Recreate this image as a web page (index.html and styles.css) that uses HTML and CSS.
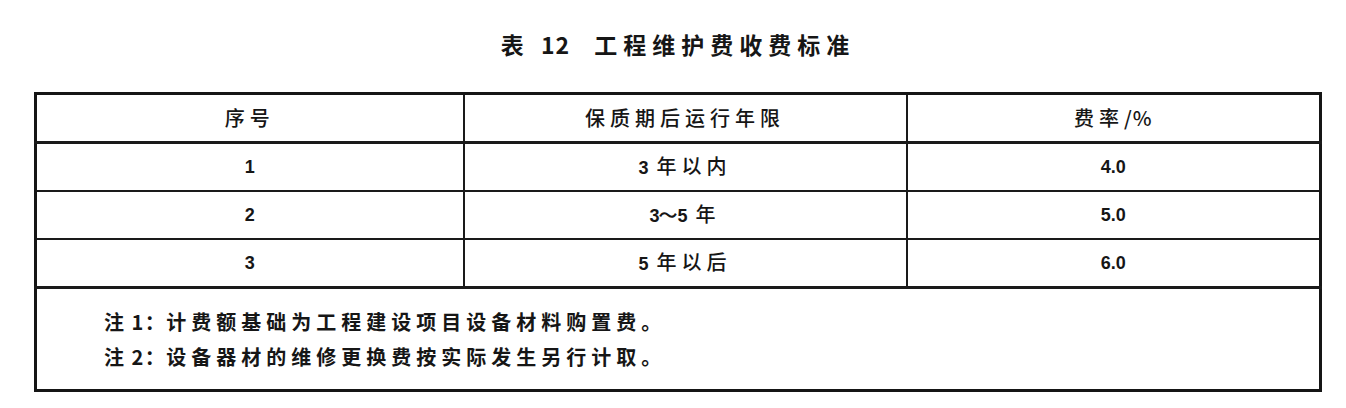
FILE: index.html
```html
<!DOCTYPE html>
<html lang="zh-CN">
<head>
<meta charset="utf-8">
<title>表 12 工程维护费收费标准</title>
<link rel="stylesheet" href="styles.css">
</head>
<body>
<div class="page">
  <h1 class="caption">表 <span class="tn">12</span><span class="gap"></span>工程维护费收费标准</h1>
  <table class="fee">
    <colgroup>
      <col class="c1"><col class="c2"><col class="c3">
    </colgroup>
    <thead>
      <tr><th>序号</th><th>保质期后运行年限</th><th>费率<span class="sym">/%</span></th></tr>
    </thead>
    <tbody>
      <tr><td class="num">1</td><td><span class="n">3</span>年以内</td><td class="num">4.0</td></tr>
      <tr><td class="num">2</td><td><span class="n">3～5</span>年</td><td class="num">5.0</td></tr>
      <tr><td class="num">3</td><td><span class="n">5</span>年以后</td><td class="num">6.0</td></tr>
      <tr class="notes">
        <td colspan="3">
          <p><span class="lbl">注 1：</span>计费额基础为工程建设项目设备材料购置费。</p>
          <p><span class="lbl">注 2：</span>设备器材的维修更换费按实际发生另行计取。</p>
        </td>
      </tr>
    </tbody>
  </table>
</div>
</body>
</html>
```

FILE: styles.css
```css
html, body {
  margin: 0;
  padding: 0;
  background: #ffffff;
}
body {
  font-family: "Noto Sans CJK SC", "Liberation Sans", sans-serif;
  color: #161616;
}
.page {
  padding: 28px 24px 0 34px;
}
.caption {
  margin: 0 0 32px 0;
  text-align: center;
  font-size: 23px;
  line-height: 32px;
  font-weight: 700;
  letter-spacing: 6px;
}
.caption .tn {
  letter-spacing: 1px;
}
.caption .gap {
  display: inline-block;
  width: 24px;
}
.fee {
  width: 1285px;
  border-collapse: collapse;
  border: 3px solid #151515;
  table-layout: fixed;
}
.c1 { width: 428px; }
.c2 { width: 443px; }
.c3 { width: 414px; }
.fee th, .fee td {
  border: 2px solid #1a1a1a;
  text-align: center;
  vertical-align: middle;
  height: 46px;
  padding: 0;
  font-size: 20px;
  font-weight: 500;
  letter-spacing: 5px;
  line-height: 24px;
}
.fee td.num {
  font-family: "Liberation Sans", "Noto Sans CJK SC", sans-serif;
  font-size: 18px;
  letter-spacing: 0;
  font-weight: 700;
}
.fee .n {
  font-family: "Liberation Sans", sans-serif;
  font-size: 18px;
  font-weight: 700;
  letter-spacing: 0;
  margin-right: 8px;
}
.fee .sym {
  letter-spacing: 1px;
}
.fee thead th {
  border-bottom-width: 3px;
  height: 46px;
}
.fee tr.notes td {
  text-align: left;
  height: 100px;
  padding: 0 0 0 67px;
  border-top-width: 3px;
}
.notes p {
  margin: 0;
  line-height: 35px;
  font-size: 20px;
  font-weight: 700;
  letter-spacing: 5px;
}
.notes .lbl {
  letter-spacing: 1.5px;
}
```
